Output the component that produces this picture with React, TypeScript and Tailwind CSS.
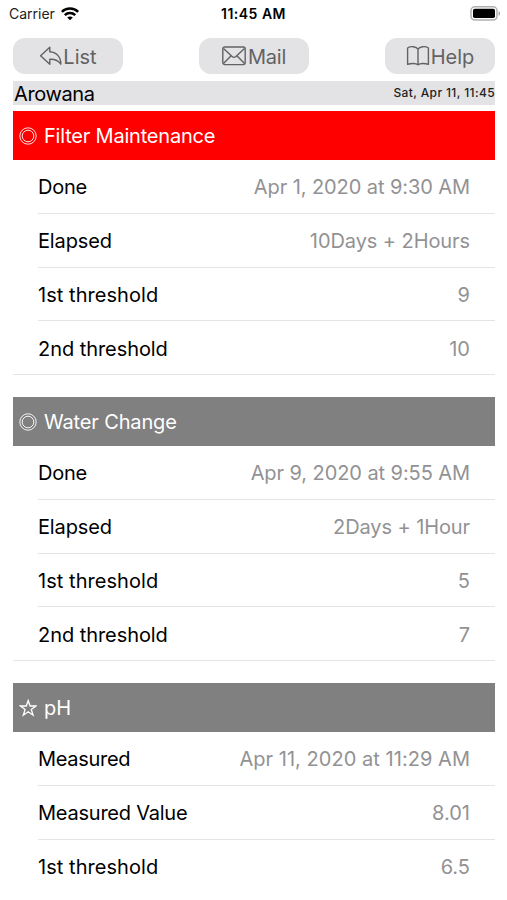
type Row = { label: string; value: string; labelClass?: string; valueClass?: string }

type Section = {
  title: string
  icon: "target" | "star"
  headerClass: string
  rows: Row[]
}

const sections: Section[] = [
  {
    title: "Filter Maintenance",
    icon: "target",
    headerClass: "bg-[#ff0000] tracking-[-0.2px]",
    rows: [
      { label: "Done", value: "Apr 1, 2020 at 9:30 AM", labelClass: "tracking-[-0.25px]", valueClass: "tracking-[-0.08px]" },
      { label: "Elapsed", value: "10Days + 2Hours", labelClass: "tracking-[-0.15px]", valueClass: "tracking-[-0.08px]" },
      { label: "1st threshold", value: "9", labelClass: "tracking-[0.050px]" },
      { label: "2nd threshold", value: "10", labelClass: "tracking-[-0.060px]" },
    ],
  },
  {
    title: "Water Change",
    icon: "target",
    headerClass: "bg-[#808080] tracking-[-0.15px]",
    rows: [
      { label: "Done", value: "Apr 9, 2020 at 9:55 AM", labelClass: "tracking-[-0.25px]", valueClass: "tracking-[-0.08px]" },
      { label: "Elapsed", value: "2Days + 1Hour", labelClass: "tracking-[-0.15px]", valueClass: "tracking-[-0.1px]" },
      { label: "1st threshold", value: "5", labelClass: "tracking-[0.050px]" },
      { label: "2nd threshold", value: "7", labelClass: "tracking-[-0.060px]" },
    ],
  },
  {
    title: "pH",
    icon: "star",
    headerClass: "bg-[#808080]",
    rows: [
      { label: "Measured", value: "Apr 11, 2020 at 11:29 AM", labelClass: "tracking-[-0.3px]", valueClass: "tracking-[0.040px]" },
      { label: "Measured Value", value: "8.01", labelClass: "tracking-[-0.23px]" },
      { label: "1st threshold", value: "6.5", labelClass: "tracking-[0.050px]" },
    ],
  },
]

function WifiIcon() {
  return (
    <svg width="18" height="14" viewBox="0 0 18 14" fill="none" stroke="#000" strokeWidth="2.5">
      <path d="M.8 4.9C5.200.5 12.800.5 17.200 4.900" />
      <path d="M3.800 8.200c2.900-2.800 7.500-2.800 10.400 0" />
      <path d="M9 13.300 6.200 10.500c1.600-1.500 4-1.500 5.600 0z" fill="#000" stroke="none" />
    </svg>
  )
}

function BatteryIcon() {
  return (
    <svg width="31" height="15" viewBox="0 0 31 15">
      <rect x="1" y="0.800" width="26" height="13.200" rx="3.800" fill="#fff" stroke="#b0b0b0" strokeWidth="1.500" />
      <rect x="3" y="2.700" width="22" height="9.400" rx="1.800" fill="#000" />
      <path d="M28.600 5.200c1.900.7 1.900 3.900 0 4.600z" fill="#a0a0a0" />
    </svg>
  )
}

function ReplyIcon() {
  return (
    <svg width="24" height="20" viewBox="0 0 24 20" fill="none" stroke="#626264" strokeWidth="1.400" strokeLinejoin="round">
      <path d="M10.800 1.200 1.600 9.700l9.200 8.600v-5c4.800-.3 8.500 1.100 11 4.900.3-6.800-3.800-12-11-12.500z" />
    </svg>
  )
}

function MailIcon() {
  return (
    <svg width="24" height="20" viewBox="0 0 24 20" fill="none" stroke="#626264" strokeWidth="1.400" strokeLinejoin="round">
      <rect x="0.800" y="1" width="22.400" height="17.600" rx="2" />
      <path d="m1.500 2.500 8.600 8c1.200 1.100 2.600 1.100 3.800 0l8.600-8M1.500 17.600l7.600-7.900M22.500 17.600l-7.600-7.900" />
    </svg>
  )
}

function BookIcon() {
  return (
    <svg width="24" height="20" viewBox="0 0 24 20" fill="none" stroke="#626264" strokeWidth="1.400" strokeLinejoin="round">
      <path d="M12 3.200C10.500.4 4.500-.2 1.600 2v16.400c3.300-1.300 8.300-1.400 10.400.4 2.100-1.800 7.100-1.700 10.400-.4V2C19.500-.2 13.500.4 12 3.200zM12 3.200v15.400" />
    </svg>
  )
}

function TargetIcon() {
  return (
    <svg width="18" height="18" viewBox="0 0 18 18" fill="none" stroke="#fff" strokeWidth="0.900">
      <circle cx="9" cy="9" r="8.200" />
      <circle cx="9" cy="9" r="5.800" />
    </svg>
  )
}

function StarIcon() {
  return (
    <svg width="18" height="18" viewBox="0 0 18 18" fill="none" stroke="#fff" strokeWidth="1.300">
      <path d="m9.200 1.500 1.900 5.500h5.900l-4.700 3.500 1.800 5.700-4.900-3.400-4.900 3.400 1.800-5.700L1.400 7h5.900z" />
    </svg>
  )
}

const buttonClass =
  "flex h-9 w-[110px] items-center justify-center rounded-xl bg-[#e3e3e5] text-[20px] text-[#626264]"

export default function App() {
  return (
    <div className="h-[900px] w-[507px] overflow-hidden bg-white font-['Inter',sans-serif] text-black">
      {/* Status bar */}
      <div className="grid h-[27px] grid-cols-3 items-center pl-[9px] pr-[6px]">
        <div className="flex items-center gap-[6px]">
          <span className="text-[14px] text-[#222]">Carrier</span>
          <WifiIcon />
        </div>
        <span className="pr-[3px] text-center text-[14px] font-semibold tracking-[0.5px]">11:45 AM</span>
        <div className="flex justify-end">
          <BatteryIcon />
        </div>
      </div>

      <div className="flex justify-between pl-[13px] pr-[12px] pt-[11px]">
        <button className={buttonClass}>
          <ReplyIcon />
          <span className="pt-px">List</span>
        </button>
        <button className={`${buttonClass} gap-[2px]`}>
          <MailIcon />
          <span className="pt-px tracking-[-0.2px]">Mail</span>
        </button>
        <button className={`${buttonClass} gap-px`}>
          <BookIcon />
          <span className="pt-px">Help</span>
        </button>
      </div>

      <div className="ml-[13px] mr-[12px] mt-[7px] flex h-6 items-center justify-between bg-[#e3e3e5]">
        <span className="pl-px pt-px text-[20px] tracking-[-0.4px]">Arowana</span>
        <span className="text-[12px] font-medium tracking-[0.380px] text-[#222]">Sat, Apr 11, 11:45</span>
      </div>

      <main className="ml-[13px] mr-[12px] mt-[6px] flex flex-col gap-[22px] text-[20px]">
        {sections.map((section) => (
          <section key={section.title}>
            <h2 className={`flex h-[49px] items-center gap-[7px] pl-[6px] text-white ${section.headerClass}`}>
              {section.icon === "star" ? <StarIcon /> : <TargetIcon />}
              <span>{section.title}</span>
            </h2>
            {section.rows.map((row, i) => (
              <div key={row.label} className={i === 3 ? "border-b border-[#e4e4e6] pl-[25px]" : "pl-[25px]"}>
                <div
                  className={`flex items-center justify-between pr-[25px] pt-[2px] ${
                    i === 3 ? "h-[52.750px]" : "h-[53.750px]"
                  } ${i < section.rows.length - 1 ? "border-b border-[#e4e4e6]" : ""}`}
                >
                  <span className={row.labelClass}>{row.label}</span>
                  <span className={`text-[#929294] ${row.valueClass ?? ""}`}>{row.value}</span>
                </div>
              </div>
            ))}
          </section>
        ))}
      </main>
    </div>
  )
}
